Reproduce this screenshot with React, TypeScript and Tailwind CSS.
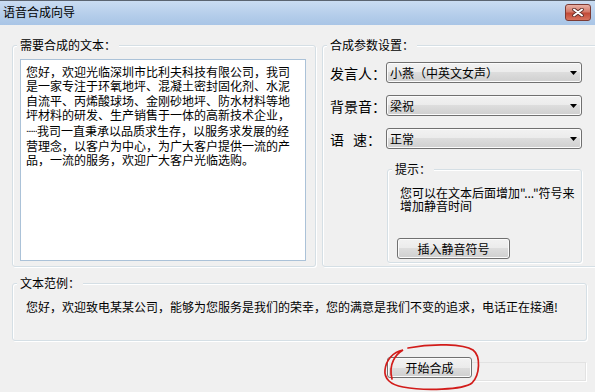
import React from 'react';

const btn =
  'rounded-[3px] border border-[#707070] bg-[linear-gradient(#f2f2f2,#ebebeb_50%,#dddddd_50%,#cfcfcf)] shadow-[inset_0_0_0_1px_#fbfbfb]';

function Group({
  label,
  className = '',
  children,
}: {
  label: string;
  className?: string;
  children?: React.ReactNode;
}) {
  return (
    <fieldset
      className={`shrink-0 rounded-[3px] border border-[#d5dfe5] px-[4px] shadow-[inset_1px_1px_0_#fff,1px_1px_0_#fff] ${className}`}
    >
      <legend className="bg-[#f0f0f0] px-[3px] text-[12px] leading-[14px]">{label}</legend>
      {children}
    </fieldset>
  );
}

function Combo({ label, value }: { label: React.ReactNode; value: string }) {
  return (
    <div className="flex h-[21px] items-center pl-[3px]">
      <div className="w-[56px] text-[14px] leading-[16px]">{label}</div>
      <div className={`${btn} flex h-[21px] w-[196px] items-center justify-between pl-[3px] pr-[4px]`}>
        <span className="text-[12px] leading-[14px]">{value}</span>
        <svg width="7" height="4" viewBox="0 0 7 4">
          <path d="M0 0H7L3.5 4Z" fill="#000" />
        </svg>
      </div>
    </div>
  );
}

const lines = [
  '您好，欢迎光临深圳市比利夫科技有限公司，我司',
  '是一家专注于环氧地坪、混凝土密封固化剂、水泥',
  '自流平、丙烯酸球场、金刚砂地坪、防水材料等地',
  '坪材料的研发、生产销售于一体的高新技术企业，',
  null,
  '营理念，以客户为中心，为广大客户提供一流的产',
  '品，一流的服务，欢迎广大客户光临选购。',
];

export default function App() {
  return (
    <div className="relative flex h-[392px] w-[595px] flex-col overflow-hidden bg-[#f0f0f0] font-['Noto_Sans_CJK_SC','Noto_Sans',sans-serif] text-black">
      {/* title bar */}
      <div className="flex h-[25px] shrink-0 justify-between border-t border-[#5b6470] bg-[linear-gradient(#cadcf1,#b4cdea_60%,#a9c5e6)]">
        <span className="pl-[3px] pt-[4px] text-[12px] leading-[14px]">语音合成向导</span>
        <div className="mr-[4px] mt-[3px] flex h-[17px] w-[26px] items-center justify-center rounded-[3px] border border-[#7d3a33] bg-[linear-gradient(#e9b1a5,#d47969_45%,#c24a38_55%,#d9745f)]">
          <svg width="12" height="9" viewBox="0 0 12 9">
            <path d="M2 1.5L10 7.5M10 1.5L2 7.5" stroke="#5a2a26" strokeWidth="3.6" strokeLinecap="round" />
            <path d="M2 1.5L10 7.5M10 1.5L2 7.5" stroke="#fff" strokeWidth="2" strokeLinecap="round" />
          </svg>
        </div>
      </div>

      {/* upper groups */}
      <div className="flex gap-[6px] pl-[12px] pt-[13px]">
        <Group label="需要合成的文本：" className="h-[229px] w-[304px]">
          <div className="ml-[3px] mt-[7px] h-[202px] w-[286px] border border-[#abc2d8] bg-white pl-[5px] pt-[5px] text-[12px] leading-[14.3px]">
            {lines.map((l, i) =>
              l === null ? (
                <div key={i} className="whitespace-nowrap">
                  <span className="inline-block w-[11px] overflow-hidden align-baseline font-['Liberation_Sans',sans-serif] text-[10px] tracking-[-1px]">
                    ......
                  </span>
                  我司一直秉承以品质求生存，以服务求发展的经
                </div>
              ) : (
                <div key={i} className="whitespace-nowrap">
                  {l}
                </div>
              )
            )}
          </div>
        </Group>

        <Group label="合成参数设置：" className="h-[229px] w-[280px]">
          <div className="mt-[10px] flex flex-col gap-[12px]">
            <Combo label="发言人：" value="小燕（中英文女声）" />
            <Combo label="背景音：" value="梁祝" />
            <Combo
              label={
                <>
                  <span>语</span>
                  <span className="ml-[9px]">速：</span>
                </>
              }
              value="正常"
            />
          </div>
          <Group label="提示：" className="ml-[60px] mt-[13px] h-[101px] w-[195px]">
            <div className="mt-[10px] pl-[8px] text-[12px] leading-[13px]">
              <div className="whitespace-nowrap">您可以在文本后面增加"..."符号来</div>
              <div>增加静音时间</div>
            </div>
            <button
              className={`${btn} ml-[5px] mt-[26px] flex h-[21px] w-[113px] items-center justify-center text-[12px] leading-[14px]`}
            >
              插入静音符号
            </button>
          </Group>
        </Group>
      </div>

      {/* example */}
      <Group label="文本范例：" className="ml-[12px] mt-[9px] h-[65px] w-[575px]">
        <div className="mt-[10px] whitespace-nowrap pl-[9px] text-[12px] leading-[14px]">
          您好，欢迎致电某某公司，能够为您服务是我们的荣幸，您的满意是我们不变的追求，电话正在接通!
        </div>
      </Group>

      {/* bottom */}
      <div className="mt-[16px] flex items-start pl-[387px]">
        <button className={`${btn} flex h-[21px] w-[85px] items-center justify-center text-[12px] leading-[14px]`}>
          开始合成
        </button>
        <div className="mt-[5px] h-[19px] w-[114px] border border-l-0 border-[#e2e2e2] shadow-[1px_1px_0_#fff]" />
      </div>

      {/* red hand-drawn mark */}
      <svg className="pointer-events-none absolute left-[378px] top-[342px]" width="106" height="50" viewBox="0 0 106 50">
        <path
          d="M30 6 C55 1 86 2 95 8 C103 14 102 33 94 41 C85 48 46 49 25 45 C12 43 6 36 7 28 C8 18 15 10 25 8 C18 12 10 22 14 37"
          fill="none"
          stroke="#d21c1a"
          strokeWidth="1.7"
          strokeLinecap="round"
        />
      </svg>
    </div>
  );
}
